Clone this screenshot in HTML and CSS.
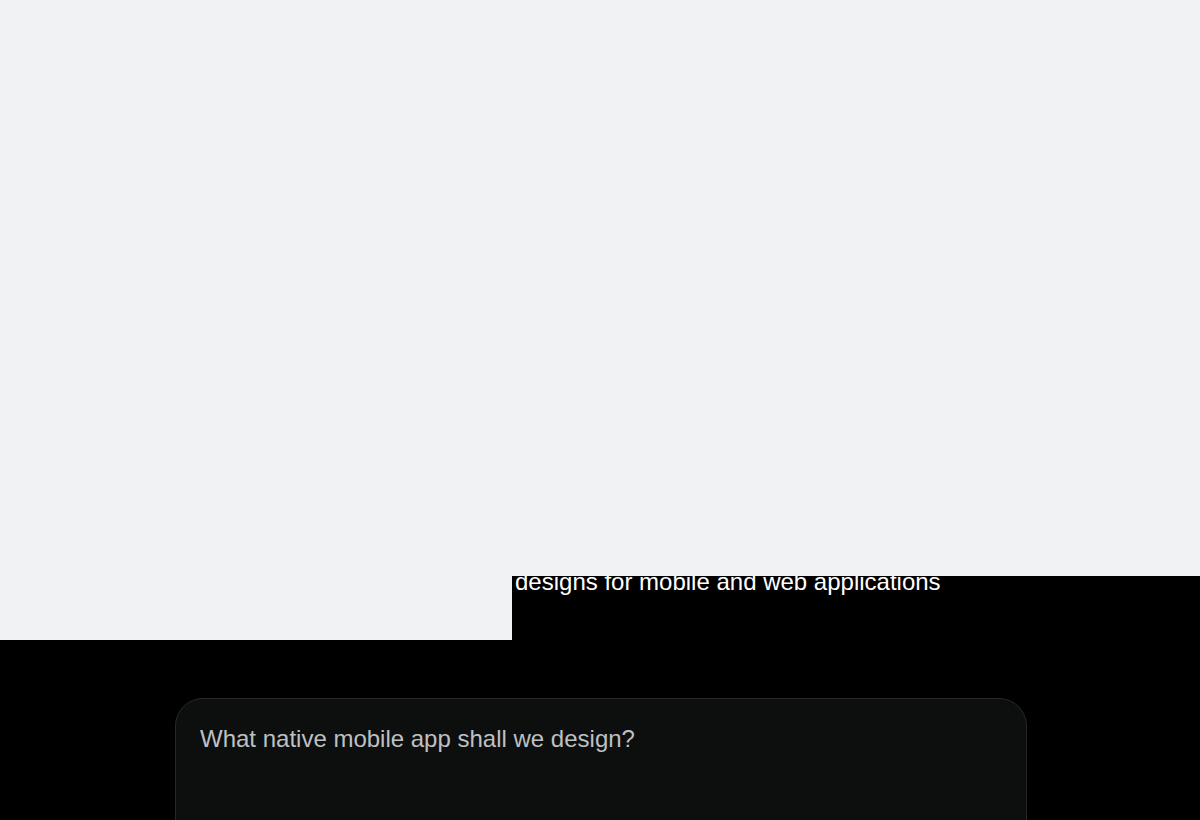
FILE: index.html
```html
<!DOCTYPE html>
<html lang="en">
<head>
<meta charset="utf-8">
<title>Design</title>
<link rel="stylesheet" href="styles.css">
</head>
<body>
<section class="hero">
  <div class="hero-left"></div>
  <div class="hero-right">
    <div class="hero-cover"></div>
    <p class="hero-text">designs for mobile and web applications</p>
  </div>
</section>
<main class="composer-wrap">
  <div class="composer">
    <div class="composer-placeholder">What native mobile app shall we design?</div>
  </div>
</main>
</body>
</html>
```
FILE: styles.css
```css
html, body {
  margin: 0;
  padding: 0;
  background: #000;
  font-family: "Liberation Sans", Arial, sans-serif;
  height: 820px;
  overflow: hidden;
}
.hero {
  display: flex;
  height: 640px;
}
.hero-left {
  width: 512px;
  background: #f1f2f4;
}
.hero-right {
  flex: 1;
  position: relative;
  background: #000;
  padding: 568px 0 0 3px;
}
.hero-cover {
  position: absolute;
  top: 0;
  left: 0;
  right: 0;
  height: 576px;
  background: #f1f2f4;
  z-index: 1;
}
.hero-text {
  margin: 0;
  color: #fff;
  font-size: 24px;
  line-height: normal;
}
.composer-wrap {
  padding: 58px 0 0 175px;
}
.composer {
  width: 852px;
  height: 240px;
  background: #0d0f0f;
  border: 1px solid #26292a;
  border-radius: 28px;
  padding: 26px 24px 0;
  box-sizing: border-box;
}
.composer-placeholder {
  color: #bfc0c2;
  font-size: 24px;
  line-height: normal;
}
```
